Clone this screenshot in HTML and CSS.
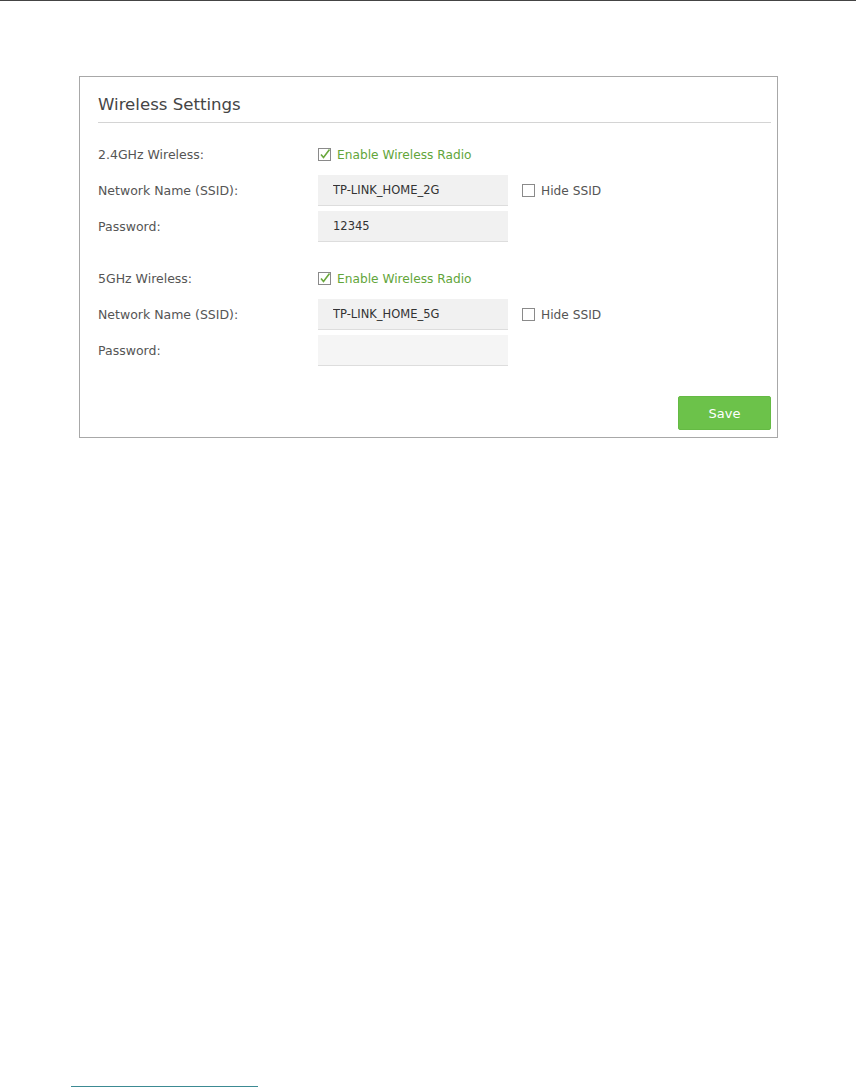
FILE: index.html
```html
<!DOCTYPE html>
<html lang="en">
<head>
    <meta charset="UTF-8">
    <meta name="viewport" content="width=device-width, initial-scale=1.0">
    <title>Wireless Settings</title>
    <link rel="stylesheet" href="styles.css">
</head>
<body>
    <header class="top-rule"></header>
    <section class="page">
        <div class="panel">
            <h2 class="panel-title">Wireless Settings</h2>

            <div class="group">
                <div class="row">
                    <label class="label">2.4GHz Wireless:</label>
                    <span class="check checked">
                        <svg width="13" height="13" viewBox="0 0 13 13"><rect x="0.5" y="0.5" width="12" height="12" fill="#fff" stroke="#8a8a8a"/><path d="M3 6.5 L5.5 9.5 L11.5 1.5" fill="none" stroke="#6aa83d" stroke-width="1.6"/></svg>
                        Enable Wireless Radio
                    </span>
                </div>
                <div class="row">
                    <label class="label">Network Name (SSID):</label>
                    <input class="field" type="text" value="TP-LINK_HOME_2G">
                    <span class="check">
                        <svg width="13" height="13" viewBox="0 0 13 13"><rect x="0.5" y="0.5" width="12" height="12" fill="#fff" stroke="#8a8a8a"/></svg>
                        Hide SSID
                    </span>
                </div>
                <div class="row">
                    <label class="label">Password:</label>
                    <input class="field" type="text" value="12345">
                </div>
            </div>

            <div class="group">
                <div class="row">
                    <label class="label">5GHz Wireless:</label>
                    <span class="check checked">
                        <svg width="13" height="13" viewBox="0 0 13 13"><rect x="0.5" y="0.5" width="12" height="12" fill="#fff" stroke="#8a8a8a"/><path d="M3 6.5 L5.5 9.5 L11.5 1.5" fill="none" stroke="#6aa83d" stroke-width="1.6"/></svg>
                        Enable Wireless Radio
                    </span>
                </div>
                <div class="row">
                    <label class="label">Network Name (SSID):</label>
                    <input class="field" type="text" value="TP-LINK_HOME_5G">
                    <span class="check">
                        <svg width="13" height="13" viewBox="0 0 13 13"><rect x="0.5" y="0.5" width="12" height="12" fill="#fff" stroke="#8a8a8a"/></svg>
                        Hide SSID
                    </span>
                </div>
                <div class="row">
                    <label class="label">Password:</label>
                    <input class="field blank" type="password" value="">
                </div>
            </div>

            <div class="actions">
                <button class="save" type="button">Save</button>
            </div>
        </div>
    </section>
    <footer class="bottom-rule"></footer>
</body>
</html>
```

FILE: styles.css
```css
body {
    background-color: #FFFFFF;
    box-sizing: border-box;
    color: #555555;
    display: flex;
    flex-direction: column;
    font-family: 'DejaVu Sans', Verdana, sans-serif;
    height: 1087px;
    margin: 0;
    overflow: hidden;
    padding: 0;
}

.top-rule {
    background-color: #444444;
    height: 1px;
}

.page {
    padding: 75px 0 0 79px;
}

.panel {
    border: 1px solid #A8A8A8;
    box-sizing: border-box;
    height: 362px;
    padding: 0 6px 0 18px;
    width: 699px;
}

.panel-title {
    border-bottom: 1px solid #D4D4D4;
    box-sizing: border-box;
    color: #454545;
    font-size: 16.6px;
    font-weight: normal;
    height: 46px;
    line-height: 20px;
    margin: 0;
    padding-top: 18px;
}

.group {
    display: flex;
    flex-direction: column;
    gap: 5px;
    margin-top: 21px;
}

.group:first-of-type {
    margin-top: 16px;
}

.row {
    align-items: center;
    display: flex;
    height: 31px;
}

.label {
    font-size: 12.5px;
    width: 220px;
}

.check {
    align-items: center;
    display: flex;
    font-size: 12.2px;
    gap: 6px;
}

.check svg {
    display: block;
}

.checked {
    color: #62A53A;
}

.field {
    background-color: #F1F1F1;
    border: none;
    border-bottom: 1px solid #DDDDDD;
    box-sizing: border-box;
    color: #333333;
    font-family: 'DejaVu Sans', Verdana, sans-serif;
    font-size: 11.5px;
    height: 31px;
    margin-right: 14px;
    padding: 0 15px;
    width: 190px;
}

.blank {
    background-color: #F5F5F5;
}

.actions {
    display: flex;
    justify-content: flex-end;
    margin-top: 30px;
}

.save {
    background-color: #6CC24A;
    border: 1px solid #65BA44;
    border-radius: 2px;
    color: #FFFFFF;
    font-family: 'DejaVu Sans', Verdana, sans-serif;
    font-size: 13px;
    height: 34px;
    width: 93px;
}

.bottom-rule {
    background-color: #3C8A93;
    height: 1px;
    margin-left: 71px;
    margin-top: auto;
    width: 187px;
}
```
